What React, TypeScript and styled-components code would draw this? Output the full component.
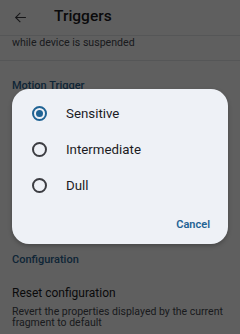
import React, { useState } from "react";
import styled, { createGlobalStyle } from "styled-components";

const Global = createGlobalStyle`
  html, body { margin: 0; padding: 0; }
  body { font-family: Roboto, "Noto Sans", sans-serif; background: #fafafa; }
  * { box-sizing: border-box; }
`;

const Screen = styled.div`
  position: relative;
  width: 240px;
  height: 334px;
  overflow: hidden;
  background: #fafafa;
`;

const Page = styled.div`
  display: flex;
  flex-direction: column;
`;

const Toolbar = styled.div`
  display: flex;
  align-items: center;
  height: 35px;
  padding-left: 14px;
  gap: 27px;
`;

const BackIcon = styled.svg`
  width: 13px;
  height: 13px;
  color: #3c3c40;
`;

const Title = styled.div`
  font-size: 15.5px;
  color: #1b1b1f;
  font-weight: 500;
  margin-top: -4px;
`;

const Divider = styled.div`
  height: 1px;
  background: #dfe1e4;
`;

const SummaryTail = styled.div`
  height: 24px;
  padding: 0 12px;
  display: flex;
  align-items: center;
  font-size: 10.6px;
  color: #44474e;
  margin-top: -6px;
  margin-bottom: 6px;
`;

const Category = styled.div`
  padding: 18px 12px 6px;
  font-size: 11px;
  line-height: 14px;
  font-weight: 500;
  color: #2b638f;
`;

const HiddenList = styled.div`
  height: 136px;
`;

const PrefTitle = styled.div`
  font-size: 12px;
  line-height: 17px;
  color: #1b1b1f;
`;

const PrefSummary = styled.div`
  font-size: 10.5px;
  line-height: 10.5px;
  color: #44474e;
  margin-top: 5px;
`;

const ResetPref = styled.div`
  display: flex;
  flex-direction: column;
  padding: 12px 12px 0;
`;

const Scrim = styled.div`
  position: absolute;
  inset: 0;
  background: rgba(0, 0, 0, 0.62);
`;

const Dialog = styled.div`
  position: absolute;
  left: 12px;
  top: 89px;
  width: 216px;
  height: 155px;
  border-radius: 17px;
  background: #eef1f6;
  box-shadow: 0 2px 4px rgba(0, 0, 0, 0.25);
  display: flex;
  flex-direction: column;
  padding: 6px 0 6px;
`;

const Option = styled.label`
  display: flex;
  align-items: center;
  height: 36px;
  padding-left: 20px;
  gap: 19px;
  cursor: pointer;
  font-size: 13.3px;
  color: #1b1b1f;
`;

const RadioRing = styled.span<{ $on: boolean }>`
  width: 15px;
  height: 15px;
  border-radius: 50%;
  border: 2px solid ${(p) => (p.$on ? "#1f6394" : "#3c3d42")};
  display: flex;
  align-items: center;
  justify-content: center;
  &::after {
    content: "";
    width: 7px;
    height: 7px;
    border-radius: 50%;
    background: ${(p) => (p.$on ? "#1f6394" : "transparent")};
  }
`;

const Actions = styled.div`
  margin-top: auto;
  display: flex;
  justify-content: flex-end;
  padding-right: 14px;
`;

const TextButton = styled.button`
  border: none;
  background: none;
  height: 28px;
  padding: 0 4px;
  font-family: Roboto, sans-serif;
  font-size: 11px;
  font-weight: 600;
  color: #1f6394;
  cursor: pointer;
`;

const options = ["Sensitive", "Intermediate", "Dull"];

export default function App() {
  const [sel, setSel] = useState(0);
  return (
    <>
      <Global />
      <Screen>
        <Page>
          <Toolbar>
            <BackIcon viewBox="0 0 24 24" fill="none" stroke="currentColor" strokeWidth="2" strokeLinecap="square">
              <path d="M21 12H4M11 4l-8 8 8 8" />
            </BackIcon>
            <Title>Triggers</Title>
          </Toolbar>
          <Divider />
          <SummaryTail>while device is suspended</SummaryTail>
          <Divider />
          <Category>Motion Trigger</Category>
          <HiddenList />
          <Category>Configuration</Category>
          <ResetPref>
            <PrefTitle>Reset configuration</PrefTitle>
            <PrefSummary>
              Revert the properties displayed by the current fragment to default
            </PrefSummary>
          </ResetPref>
        </Page>
        <Scrim />
        <Dialog>
          {options.map((o, i) => (
            <Option key={o} onClick={() => setSel(i)}>
              <RadioRing $on={sel === i} />
              {o}
            </Option>
          ))}
          <Actions>
            <TextButton>Cancel</TextButton>
          </Actions>
        </Dialog>
      </Screen>
    </>
  );
}
